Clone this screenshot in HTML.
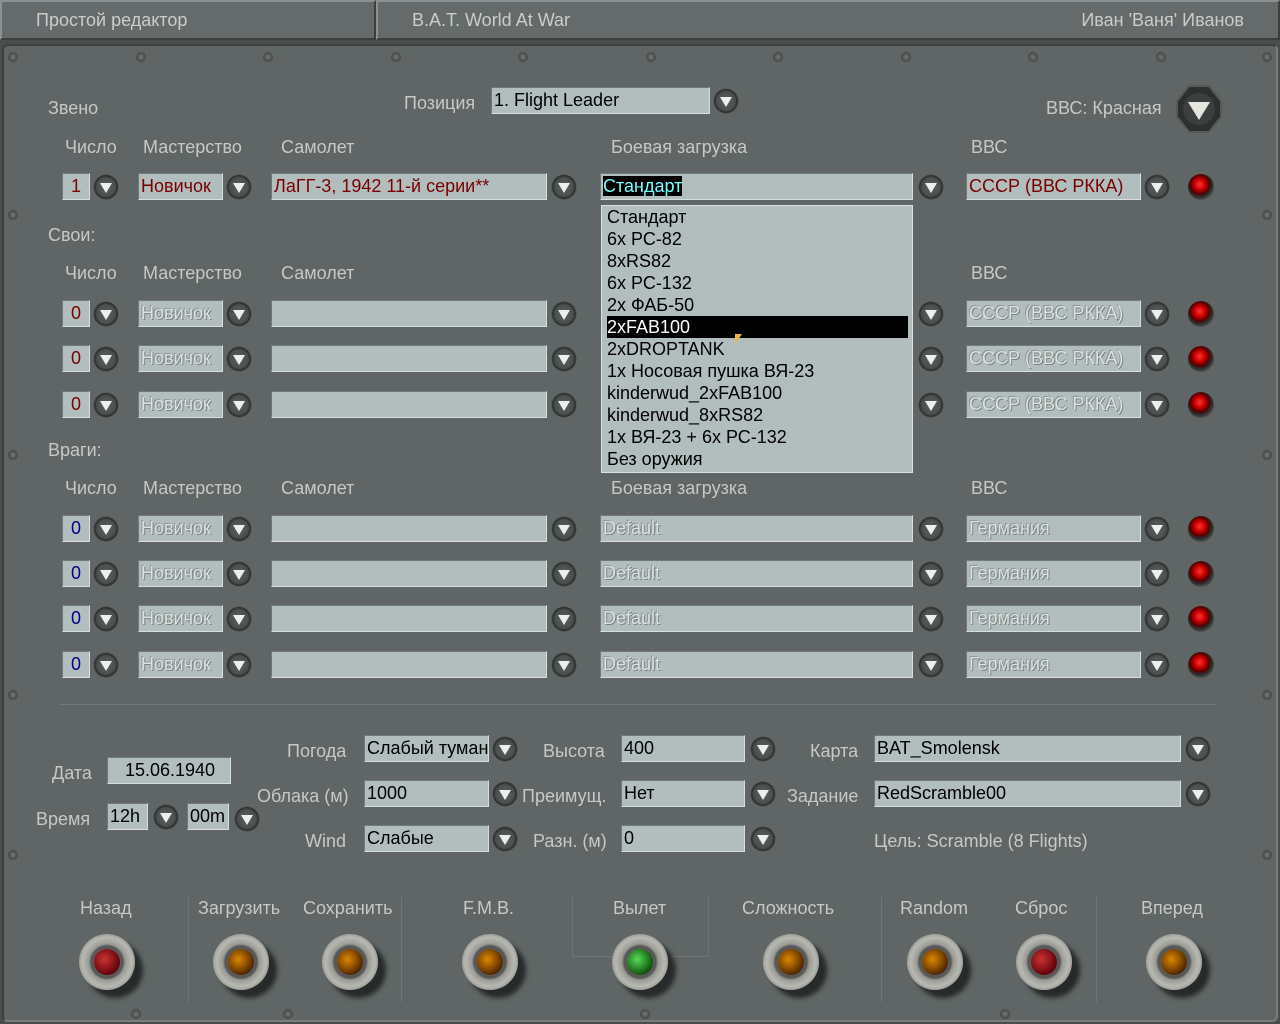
<!DOCTYPE html><html><head><meta charset="utf-8"><style>
body{margin:0;width:1280px;height:1024px;background:#4a4f4e;overflow:hidden;font-family:"Liberation Sans",sans-serif;position:relative}
.hd{position:absolute;top:0;height:40px;background:#646b6a;border:2px solid;border-color:#8a9190 #3a3e3d #3a3e3d #8a9190;box-sizing:border-box;color:#c9cecd;font-size:18px;line-height:36px}
.pn{position:absolute;left:2px;top:44px;width:1276px;height:978px;background:#5f6665;border:2px solid;border-color:#3c4140 #777e7d #777e7d #3c4140;box-sizing:border-box;border-radius:6px}
.t{position:absolute;color:#c5cac9;font-size:18px;white-space:nowrap;line-height:20px}
.f{position:absolute;height:27px;background:#b2bebd;border:1px solid;border-color:#727a79 #d8dedd #d8dedd #727a79;box-sizing:border-box;font-size:18px;line-height:24px;padding-left:2px;color:#000;overflow:hidden;white-space:nowrap}
.r{color:#7a0000}.bl{color:#00008a}
.d{color:#dde3e2;text-shadow:1px 1px 0 #7d8584,-1px -1px 0 #8f9796}
.b{position:absolute;width:26px;height:26px;border-radius:50%;background:radial-gradient(circle,#5a605f 0,#4a504f 50%,#2a2e2d 62%,#7b8281 74%,#3a3f3e 100%)}
.b:after{content:"";position:absolute;left:7px;top:9px;border-left:6px solid transparent;border-right:6px solid transparent;border-top:10px solid #eee}
.led{position:absolute;width:26px;height:26px;border-radius:50%;background:radial-gradient(circle at 45% 40%,#f33 0,#c00 25%,#500 45%,#2a2e2d 58%,#555 75%,#3a3f3e 100%)}
.k{position:absolute;width:56px;height:56px;border-radius:50%;background:radial-gradient(circle,#777 0,#555 40%,#9a9b94 46%,#b8b9b2 62%,#7c7d78 82%,#3a3d3c 100%);box-shadow:8px 8px 5px #262a29}
.k i{position:absolute;left:15px;top:15px;width:26px;height:26px;border-radius:50%}
.sc{position:absolute;width:10px;height:10px;border-radius:50%;background:radial-gradient(circle,#777,#2d3130)}
.dl{position:absolute;left:601px;top:205px;width:312px;height:268px;background:#b2bebd;border:1px solid #dde3e2;box-sizing:border-box;font-size:18px;line-height:22px;padding:0 4px 0 5px;color:#000}
.dl div{height:22px;white-space:nowrap}
.sep{position:absolute;width:1px;background:#6f7675}
</style></head><body>
<div class="hd" style="left:0;width:376px;padding-left:34px">Простой редактор</div>
<div class="hd" style="left:376px;width:904px;padding-left:34px">B.A.T. World At War<span style="position:absolute;right:34px">Иван 'Ваня' Иванов</span></div>
<div class="pn"></div>
<div class="sc" style="left:8px;top:52px"></div><div class="sc" style="left:136px;top:52px"></div><div class="sc" style="left:263px;top:52px"></div><div class="sc" style="left:391px;top:52px"></div><div class="sc" style="left:518px;top:52px"></div><div class="sc" style="left:646px;top:52px"></div><div class="sc" style="left:773px;top:52px"></div><div class="sc" style="left:901px;top:52px"></div><div class="sc" style="left:1028px;top:52px"></div><div class="sc" style="left:1156px;top:52px"></div><div class="sc" style="left:1262px;top:52px"></div>
<div class="sc" style="left:8px;top:210px"></div><div class="sc" style="left:8px;top:450px"></div><div class="sc" style="left:8px;top:690px"></div><div class="sc" style="left:8px;top:850px"></div>
<div class="sc" style="left:1262px;top:210px"></div><div class="sc" style="left:1262px;top:450px"></div><div class="sc" style="left:1262px;top:690px"></div><div class="sc" style="left:1262px;top:850px"></div>
<div class="sc" style="left:131px;top:1009px"></div><div class="sc" style="left:283px;top:1009px"></div><div class="sc" style="left:640px;top:1009px"></div><div class="sc" style="left:1000px;top:1009px"></div>

<div class="t" style="left:48px;top:98px">Звено</div>
<div class="t" style="left:404px;top:93px">Позиция</div>
<div class="f" style="left:491px;top:87px;width:219px">1. Flight Leader</div><div class="b" style="left:713px;top:88px"></div>
<div class="t" style="left:1046px;top:98px">ВВС: Красная</div>
<svg style="position:absolute;left:1175px;top:84px" width="48" height="50"><polygon points="14,2 34,2 46,17 46,33 34,48 14,48 2,33 2,17" fill="#2c302f" stroke="#555b5a" stroke-width="2"/><circle cx="24" cy="25" r="16" fill="#3b403f"/><polygon points="13,18 35,18 24,36" fill="#e6e6e0"/></svg>

<div class="t" style="left:65px;top:137px">Число</div><div class="t" style="left:143px;top:137px">Мастерство</div><div class="t" style="left:281px;top:137px">Самолет</div><div class="t" style="left:611px;top:137px">Боевая загрузка</div><div class="t" style="left:971px;top:137px">ВВС</div>
<div class="f r" style="left:62px;top:173px;width:28px;text-align:center;padding:0">1</div><div class="b" style="left:93px;top:174px"></div>
<div class="f r" style="left:138px;top:173px;width:85px">Новичок</div><div class="b" style="left:226px;top:174px"></div>
<div class="f r" style="left:271px;top:173px;width:276px">ЛаГГ-3, 1942 11-й серии**</div><div class="b" style="left:551px;top:174px"></div>
<div class="f" style="left:600px;top:173px;width:313px"><span style="background:#000;color:#7ff">Стандарт</span></div><div class="b" style="left:918px;top:174px"></div>
<div class="f r" style="left:966px;top:173px;width:175px">СССР (ВВС РККА)</div><div class="b" style="left:1144px;top:174px"></div><div class="led" style="left:1188px;top:174px"></div>

<div class="t" style="left:48px;top:225px">Свои:</div>
<div class="t" style="left:65px;top:263px">Число</div><div class="t" style="left:143px;top:263px">Мастерство</div><div class="t" style="left:281px;top:263px">Самолет</div><div class="t" style="left:971px;top:263px">ВВС</div>

<div class="f r" style="left:62px;top:300px;width:28px;text-align:center;padding:0">0</div><div class="b" style="left:93px;top:301px"></div><div class="f d" style="left:138px;top:300px;width:85px">Новичок</div><div class="b" style="left:226px;top:301px"></div><div class="f" style="left:271px;top:300px;width:276px"></div><div class="b" style="left:551px;top:301px"></div><div class="b" style="left:918px;top:301px"></div><div class="f d" style="left:966px;top:300px;width:175px">СССР (ВВС РККА)</div><div class="b" style="left:1144px;top:301px"></div><div class="led" style="left:1188px;top:301px"></div>
<div class="f r" style="left:62px;top:345px;width:28px;text-align:center;padding:0">0</div><div class="b" style="left:93px;top:346px"></div><div class="f d" style="left:138px;top:345px;width:85px">Новичок</div><div class="b" style="left:226px;top:346px"></div><div class="f" style="left:271px;top:345px;width:276px"></div><div class="b" style="left:551px;top:346px"></div><div class="b" style="left:918px;top:346px"></div><div class="f d" style="left:966px;top:345px;width:175px">СССР (ВВС РККА)</div><div class="b" style="left:1144px;top:346px"></div><div class="led" style="left:1188px;top:346px"></div>
<div class="f r" style="left:62px;top:391px;width:28px;text-align:center;padding:0">0</div><div class="b" style="left:93px;top:392px"></div><div class="f d" style="left:138px;top:391px;width:85px">Новичок</div><div class="b" style="left:226px;top:392px"></div><div class="f" style="left:271px;top:391px;width:276px"></div><div class="b" style="left:551px;top:392px"></div><div class="b" style="left:918px;top:392px"></div><div class="f d" style="left:966px;top:391px;width:175px">СССР (ВВС РККА)</div><div class="b" style="left:1144px;top:392px"></div><div class="led" style="left:1188px;top:392px"></div>

<div class="t" style="left:48px;top:440px">Враги:</div>
<div class="t" style="left:65px;top:478px">Число</div><div class="t" style="left:143px;top:478px">Мастерство</div><div class="t" style="left:281px;top:478px">Самолет</div><div class="t" style="left:611px;top:478px">Боевая загрузка</div><div class="t" style="left:971px;top:478px">ВВС</div>

<div class="f bl" style="left:62px;top:515px;width:28px;text-align:center;padding:0">0</div><div class="b" style="left:93px;top:516px"></div><div class="f d" style="left:138px;top:515px;width:85px">Новичок</div><div class="b" style="left:226px;top:516px"></div><div class="f" style="left:271px;top:515px;width:276px"></div><div class="b" style="left:551px;top:516px"></div><div class="f d" style="left:600px;top:515px;width:313px">Default</div><div class="b" style="left:918px;top:516px"></div><div class="f d" style="left:966px;top:515px;width:175px">Германия</div><div class="b" style="left:1144px;top:516px"></div><div class="led" style="left:1188px;top:516px"></div>
<div class="f bl" style="left:62px;top:560px;width:28px;text-align:center;padding:0">0</div><div class="b" style="left:93px;top:561px"></div><div class="f d" style="left:138px;top:560px;width:85px">Новичок</div><div class="b" style="left:226px;top:561px"></div><div class="f" style="left:271px;top:560px;width:276px"></div><div class="b" style="left:551px;top:561px"></div><div class="f d" style="left:600px;top:560px;width:313px">Default</div><div class="b" style="left:918px;top:561px"></div><div class="f d" style="left:966px;top:560px;width:175px">Германия</div><div class="b" style="left:1144px;top:561px"></div><div class="led" style="left:1188px;top:561px"></div>
<div class="f bl" style="left:62px;top:605px;width:28px;text-align:center;padding:0">0</div><div class="b" style="left:93px;top:606px"></div><div class="f d" style="left:138px;top:605px;width:85px">Новичок</div><div class="b" style="left:226px;top:606px"></div><div class="f" style="left:271px;top:605px;width:276px"></div><div class="b" style="left:551px;top:606px"></div><div class="f d" style="left:600px;top:605px;width:313px">Default</div><div class="b" style="left:918px;top:606px"></div><div class="f d" style="left:966px;top:605px;width:175px">Германия</div><div class="b" style="left:1144px;top:606px"></div><div class="led" style="left:1188px;top:606px"></div>
<div class="f bl" style="left:62px;top:651px;width:28px;text-align:center;padding:0">0</div><div class="b" style="left:93px;top:652px"></div><div class="f d" style="left:138px;top:651px;width:85px">Новичок</div><div class="b" style="left:226px;top:652px"></div><div class="f" style="left:271px;top:651px;width:276px"></div><div class="b" style="left:551px;top:652px"></div><div class="f d" style="left:600px;top:651px;width:313px">Default</div><div class="b" style="left:918px;top:652px"></div><div class="f d" style="left:966px;top:651px;width:175px">Германия</div><div class="b" style="left:1144px;top:652px"></div><div class="led" style="left:1188px;top:652px"></div>

<div class="dl"><div>Стандарт</div><div>6x РС-82</div><div>8xRS82</div><div>6x РС-132</div><div>2x ФАБ-50</div><div style="background:#000;color:#fff">2xFAB100</div><div>2xDROPTANK</div><div>1x Носовая пушка ВЯ-23</div><div>kinderwud_2xFAB100</div><div>kinderwud_8xRS82</div><div>1x ВЯ-23 + 6x РС-132</div><div>Без оружия</div></div>
<div style="position:absolute;left:735px;top:334px;border-left:7px solid #e8b838;border-bottom:10px solid transparent;width:0;height:0"></div>

<div style="position:absolute;left:60px;top:704px;width:1155px;height:1px;background:#737a79"></div>
<div class="t" style="left:52px;top:763px">Дата</div>
<div class="f" style="left:107px;top:757px;width:124px;text-align:center">15.06.1940</div>
<div class="t" style="left:36px;top:809px">Время</div>
<div class="f" style="left:107px;top:803px;width:41px">12h</div><div class="b" style="left:153px;top:804px"></div>
<div class="f" style="left:187px;top:803px;width:42px">00m</div><div class="b" style="left:234px;top:806px"></div>

<div class="t" style="left:287px;top:741px">Погода</div><div class="f" style="left:364px;top:735px;width:125px">Слабый туман</div><div class="b" style="left:492px;top:736px"></div>
<div class="t" style="left:257px;top:786px">Облака (м)</div><div class="f" style="left:364px;top:780px;width:125px">1000</div><div class="b" style="left:492px;top:781px"></div>
<div class="t" style="left:305px;top:831px">Wind</div><div class="f" style="left:364px;top:825px;width:125px">Слабые</div><div class="b" style="left:492px;top:826px"></div>

<div class="t" style="left:543px;top:741px">Высота</div><div class="f" style="left:621px;top:735px;width:124px">400</div><div class="b" style="left:750px;top:736px"></div>
<div class="t" style="left:522px;top:786px">Преимущ.</div><div class="f" style="left:621px;top:780px;width:124px">Нет</div><div class="b" style="left:750px;top:781px"></div>
<div class="t" style="left:533px;top:831px">Разн. (м)</div><div class="f" style="left:621px;top:825px;width:124px">0</div><div class="b" style="left:750px;top:826px"></div>

<div class="t" style="left:810px;top:741px">Карта</div><div class="f" style="left:874px;top:735px;width:307px">BAT_Smolensk</div><div class="b" style="left:1185px;top:736px"></div>
<div class="t" style="left:787px;top:786px">Задание</div><div class="f" style="left:874px;top:780px;width:307px">RedScramble00</div><div class="b" style="left:1185px;top:781px"></div>
<div class="t" style="left:874px;top:831px">Цель: Scramble (8 Flights)</div>

<div class="sep" style="left:188px;top:897px;height:105px"></div><div class="sep" style="left:401px;top:897px;height:105px"></div><div class="sep" style="left:572px;top:897px;height:60px"></div><div class="sep" style="left:708px;top:897px;height:60px"></div><div style="position:absolute;left:572px;top:956px;width:136px;height:1px;background:#6f7675"></div><div class="sep" style="left:881px;top:897px;height:105px"></div><div class="sep" style="left:1096px;top:897px;height:105px"></div>

<div class="t" style="left:80px;top:898px">Назад</div><div class="t" style="left:198px;top:898px">Загрузить</div><div class="t" style="left:303px;top:898px">Сохранить</div><div class="t" style="left:463px;top:898px">F.M.B.</div><div class="t" style="left:613px;top:898px">Вылет</div><div class="t" style="left:742px;top:898px">Сложность</div><div class="t" style="left:900px;top:898px">Random</div><div class="t" style="left:1015px;top:898px">Сброс</div><div class="t" style="left:1141px;top:898px">Вперед</div>

<div class="k" style="left:79px;top:934px"><i style="background:radial-gradient(circle at 40% 40%,#c33,#5a0008 75%)"></i></div>
<div class="k" style="left:213px;top:934px"><i style="background:radial-gradient(circle at 40% 40%,#d80,#4a2200 75%)"></i></div>
<div class="k" style="left:322px;top:934px"><i style="background:radial-gradient(circle at 40% 40%,#d80,#4a2200 75%)"></i></div>
<div class="k" style="left:462px;top:934px"><i style="background:radial-gradient(circle at 40% 40%,#d80,#4a2200 75%)"></i></div>
<div class="k" style="left:612px;top:934px"><i style="background:radial-gradient(circle at 40% 40%,#5d5,#0d4a08 75%)"></i></div>
<div class="k" style="left:763px;top:934px"><i style="background:radial-gradient(circle at 40% 40%,#d80,#4a2200 75%)"></i></div>
<div class="k" style="left:907px;top:934px"><i style="background:radial-gradient(circle at 40% 40%,#d80,#4a2200 75%)"></i></div>
<div class="k" style="left:1016px;top:934px"><i style="background:radial-gradient(circle at 40% 40%,#c33,#5a0008 75%)"></i></div>
<div class="k" style="left:1146px;top:934px"><i style="background:radial-gradient(circle at 40% 40%,#d80,#4a2200 75%)"></i></div>
</body></html>
